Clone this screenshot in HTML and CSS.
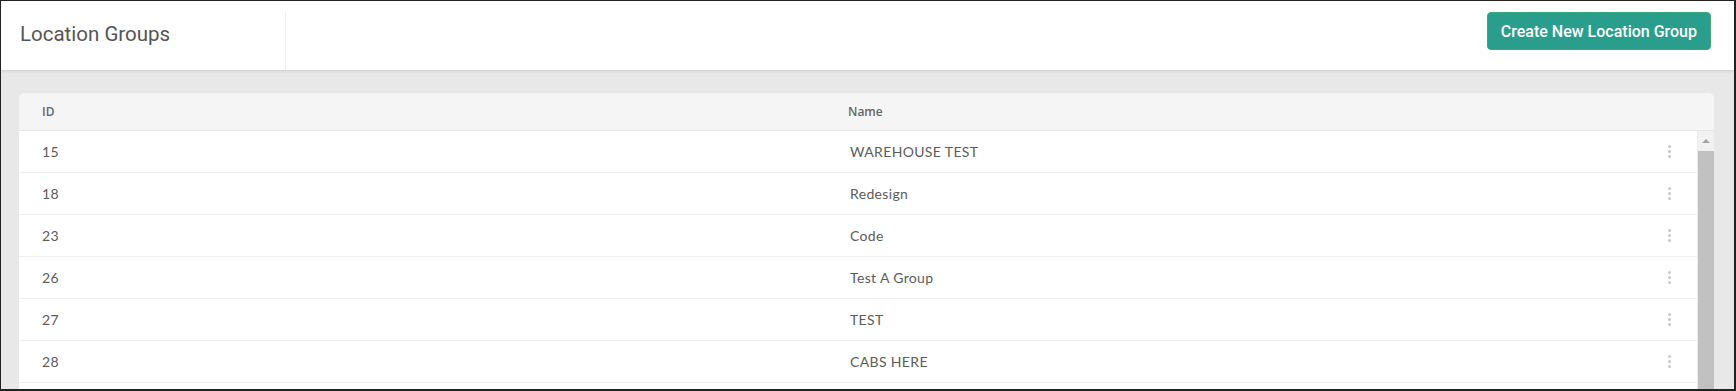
FILE: index.html
```html
<!DOCTYPE html>
<html lang="en">
<head>
    <meta charset="utf-8">
    <title>Location Groups</title>
    <link rel="stylesheet" href="styles.css">
</head>
<body>
    <div class="frame">
        <div class="topbar">
            <div class="title-box">
                <h1 class="title">Location Groups</h1>
            </div>
            <button class="create-btn">Create New Location Group</button>
        </div>

        <div class="content">
            <div class="card">
                <div class="table-head">
                    <div class="col-id">ID</div>
                    <div class="col-name">Name</div>
                    <div></div>
                </div>
                <div class="table-body">
                    <div class="rows">
                        <div class="row"><div class="col-id">15</div><div class="col-name">WAREHOUSE TEST</div><div class="kebab"><span></span><span></span><span></span></div></div>
                        <div class="row"><div class="col-id">18</div><div class="col-name">Redesign</div><div class="kebab"><span></span><span></span><span></span></div></div>
                        <div class="row"><div class="col-id">23</div><div class="col-name">Code</div><div class="kebab"><span></span><span></span><span></span></div></div>
                        <div class="row"><div class="col-id">26</div><div class="col-name">Test A Group</div><div class="kebab"><span></span><span></span><span></span></div></div>
                        <div class="row"><div class="col-id">27</div><div class="col-name">TEST</div><div class="kebab"><span></span><span></span><span></span></div></div>
                        <div class="row"><div class="col-id">28</div><div class="col-name">CABS HERE</div><div class="kebab"><span></span><span></span><span></span></div></div>
                    </div>
                    <div class="scrollbar">
                        <div class="scroll-up"><span class="arrow"></span></div>
                        <div class="scroll-thumb"></div>
                    </div>
                </div>
            </div>
        </div>
    </div>
</body>
</html>
```

FILE: styles.css
```css
html, body {
    margin: 0;
    padding: 0;
}

body {
    font-family: Lato, "Open Sans", Arial, sans-serif;
    background-color: #e8e8e8;
}

.frame {
    display: flex;
    flex-direction: column;
    height: 391px;
    box-sizing: border-box;
    border-top: 1px solid #222;
    border-left: 1px solid #222;
    border-right: 2px solid #222;
    border-bottom: 2px solid #222;
    background-color: #e8e8e8;
    overflow: hidden;
}

.topbar {
    display: flex;
    align-items: flex-start;
    flex: none;
    height: 69px;
    background-color: #fff;
    box-shadow: 0 1px 3px rgba(0,0,0,0.12);
    position: relative;
    z-index: 1;
}

.title-box {
    width: 265px;
    height: 59px;
    margin-top: 10px;
    padding-left: 19px;
    border-right: 1px solid #efefef;
}

.title {
    margin: 0;
    padding-top: 11px;
    font-family: Roboto, Arial, sans-serif;
    font-size: 20.5px;
    line-height: 24px;
    font-weight: 400;
    color: #555;
}

.create-btn {
    margin: 11px 23px 0 auto;
    height: 38px;
    padding: 0 13px;
    font-family: Roboto, Arial, sans-serif;
    font-size: 16px;
    font-weight: 500;
    color: #fff;
    background-color: #2a9e8c;
    border: 1px solid #3aab74;
    border-radius: 4px;
    cursor: pointer;
}

.content {
    flex: 1;
    display: flex;
    padding: 23px 20px 0 18px;
}

.card {
    flex: 1;
    display: flex;
    flex-direction: column;
    background-color: #fff;
    border-radius: 6px 6px 0 0;
    overflow: hidden;
}

.table-head, .row {
    display: grid;
    grid-template-columns: 806px 1fr 56px;
    align-items: center;
    padding-left: 23px;
}

.table-head {
    height: 37px;
    background-color: #f5f5f5;
    border-bottom: 1px solid #e6e6e6;
    font-family: "Open Sans", Lato, Arial, sans-serif;
    font-size: 12px;
    font-weight: 600;
    color: #666;
}

.table-body {
    flex: 1;
    display: flex;
}

.rows {
    flex: 1;
}

.row {
    height: 41px;
    border-bottom: 1px solid #f0f0f0;
    font-size: 14px;
    letter-spacing: 0.35px;
    color: #5c5c5c;
}

.row .col-name {
    padding-left: 2px;
}

.kebab {
    display: flex;
    flex-direction: column;
    align-items: center;
    gap: 2px;
}

.kebab span {
    width: 3px;
    height: 3px;
    border-radius: 50%;
    background-color: #c8c8c8;
}

.scrollbar {
    width: 17px;
    box-sizing: border-box;
    border-left: 1px solid #ececec;
    background-color: #f1f1f1;
    display: flex;
    flex-direction: column;
}

.scroll-up {
    height: 20px;
    display: flex;
    justify-content: center;
    align-items: center;
}

.arrow {
    width: 0;
    height: 0;
    border-left: 4px solid transparent;
    border-right: 4px solid transparent;
    border-bottom: 4px solid #a3a3a3;
}

.scroll-thumb {
    flex: 1;
    background-color: #c1c1c1;
}
```
